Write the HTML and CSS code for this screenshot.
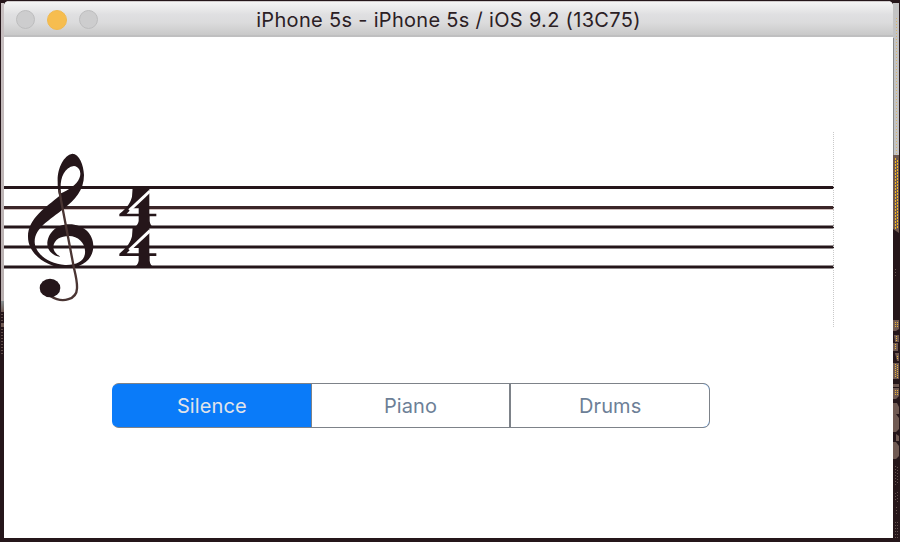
FILE: index.html
```
<!DOCTYPE html>
<html lang="en">
<head>
<meta charset="utf-8">
<title>iPhone 5s</title>
<link rel="stylesheet" href="styles.css">
</head>
<body>
<div class="desktop">
  <div class="left-edge"></div>
  <main class="window">
    <header class="titlebar">
      <div class="lights"><i class="light"></i><i class="light minimize"></i><i class="light"></i></div>
      <h1 class="title">iPhone 5s - iPhone 5s / iOS 9.2 (13C75)</h1>
    </header>
    <section class="screen">
      <svg class="staff" viewBox="4 130 832 200" width="832" height="200" aria-label="Treble clef, four four time">
        <g fill="none" stroke="#25161a" stroke-width="3">
          <path d="M4 187.5H834M4 227H834M4 247H834M4 267H834"/>
          <path d="M4 207.5H834" stroke="#3b2628"/>
        </g>
        <path d="M4 209.5H834" stroke="#cfbfbd" stroke-width="1"/>
        <path d="M833.5 132V328" stroke="#c9c9c9" stroke-width="1" stroke-dasharray="1 1"/>
        <g transform="translate(0 140) scale(.33333)" fill="#25161a">
          <path fill-rule="evenodd" d="M178 168C140 200 84 235 84 290C84 342 140 383 200 384C250 384 280 355 280 318C280 282 250 253 208 253C165 253 142 285 142 312C142 335 165 350 181 350C165 340 160 330 160 320C163 298 182 288 207 288C235 288 258 310 255 340C252 365 228 376 195 375C145 372 105 340 104 305C105 262 150 240 190 207C225 180 252 150 252 105C251 75 238 42 217 41C190 46 171 88 173 125C173 145 175 155 178 168ZM183 160C178 125 188 82 222 78C240 80 245 100 238 115C230 135 206 150 183 160Z"/>
          <path d="M178 150L183 180L222 385C228 410 232 425 231 445C230 477 190 492 152 469" fill="none" stroke="#4a3533" stroke-width="7"/>
          <ellipse cx="150" cy="444" rx="31" ry="28"/>
          <g id="four">
            <path d="M398 142H448V221H469V229H449V243Q450 258 464 263H398Q414 258 416 243V229H358V222C382 203 392 187 396 170Z"/>
            <path d="M380 221L396 205H416V221Z" fill="#fff"/>
            <path d="M450 153L388 211" stroke="#fff" stroke-width="9"/>
          </g>
          <use href="#four" y="119"/>
        </g>
      </svg>
      <div class="segments">
        <button class="segment selected">Silence</button>
        <button class="segment">Piano</button>
        <button class="segment">Drums</button>
      </div>
    </section>
  </main>
  <svg class="right-edge" viewBox="893 0 7 542" width="7" height="542">
    <path d="M893 3h6v152h-6z" fill="#c3c3c4"/>
    <path d="M893.5 38V155" stroke="#858789"/>
    <path d="M896.5 18V155" stroke="#d9b469" stroke-dasharray="1 2"/>
    <path d="M893 155h6v78l-6-4z" fill="#6e5850"/>
    <path d="M895.5 158V229M897.5 160V229" stroke="#f5b820" stroke-dasharray="2 1"/>
    <path d="M893 320h6v9l-3 2h-3zM894 335h5v7h-4zM893 343h5v8h-5zM895 353h4v8h-2zM893 363h6v16h-6zM893 384h6v3h-6zM893 388h6v8l-3 3h-3zM893 403l4 0 2 4v7l-3 0 3 4v11l-3 3h-3zM896 434l3 2v5h-3zM893 442h3l3 4v10l-3 3h-3z" fill="#705a53"/>
    <path d="M895.5 322V328M897.5 322V328M896.5 336V341M895.5 344V349M897.5 356V360M895.5 364V378M897.5 365V378M895.5 390V396M897.5 390V396" stroke="#e9b43e" stroke-dasharray="1 1"/>
    <path d="M895.5 269V278M895.5 466V486M897.5 467V483M895.5 493V502M897.5 492V503M896.5 507V514M895.5 522V538M897.5 522V540" stroke="#65534f" stroke-dasharray="1 2"/>
  </svg>
</div>
</body>
</html>
```
FILE: styles.css
```
* { box-sizing: border-box; }
body { margin: 0; overflow: hidden; font-family: Inter, "Liberation Sans", sans-serif; }
.desktop {
  display: flex;
  width: 900px;
  height: 542px;
  padding-left: 1px;
  background: #25161a;
}
.left-edge {
  width: 3px;
  height: 542px;
  background:
    linear-gradient(#c8c0c1, #b9b0b0) 0 3px / 3px 298px no-repeat,
    linear-gradient(#879092, #705a53) 0 301px / 3px 11px no-repeat,
    linear-gradient(#705a53, #705a53) 0 323px / 3px 4px no-repeat,
    repeating-linear-gradient(#25161a 0 2px, #604e4a 2px 3px) 0 312px / 2px 44px no-repeat;
}
.window {
  width: 889px;
  height: 537px;
  margin-top: 1px;
  background: #fff;
  border-radius: 5px 5px 0 0;
  overflow: hidden;
}
.titlebar {
  display: grid;
  grid-template-columns: 94px 1fr 94px;
  height: 36px;
  align-items: center;
  border-top: 1px solid #cfcbcc;
  border-bottom: 2px solid #bfbfc0;
  background: linear-gradient(#f4f4f4, #dfdfe1 13px, #dcdcdd 20px, #c9c9c9);
}
.lights { display: flex; gap: 12px; padding: 3px 0 0 12px; }
.light {
  width: 19px;
  height: 19px;
  margin-top: -1px;
  border: 1px solid #bdbdbe;
  border-radius: 50%;
  background: #cdcdce;
}
.minimize { width: 20px; height: 20px; border-color: #f0b94f; background: #f6bd4f; }
.title {
  margin: 2px 0 0;
  text-align: center;
  color: #2b2024;
  font-size: 20px;
  font-weight: 400;
  line-height: 26px;
  letter-spacing: .31px;
  white-space: nowrap;
}
.screen { display: flex; flex-direction: column; padding-top: 93px; }
.staff { display: block; }
.segments {
  display: flex;
  width: 598px;
  height: 45px;
  margin: 53px 0 0 108px;
  border: 1px solid #7d8289;
  border-radius: 7px;
  overflow: hidden;
}
.segment {
  flex: 1;
  padding: 0;
  border: 0;
  border-left: 1px solid #7d8289;
  background: #fff;
  color: #6d7f97;
  font: 400 20px/44px Inter, "Liberation Sans", sans-serif;
  letter-spacing: .1px;
}
.segment:last-child { border-left-width: 2px; }
.segment.selected {
  border-left: 0;
  background: #0a7bf9;
  color: #e1e4e9;
}
.segments:has(.selected:first-child) {
  border-left-color: #0a7bf9;
  background: #0a7bf9;
}
```
